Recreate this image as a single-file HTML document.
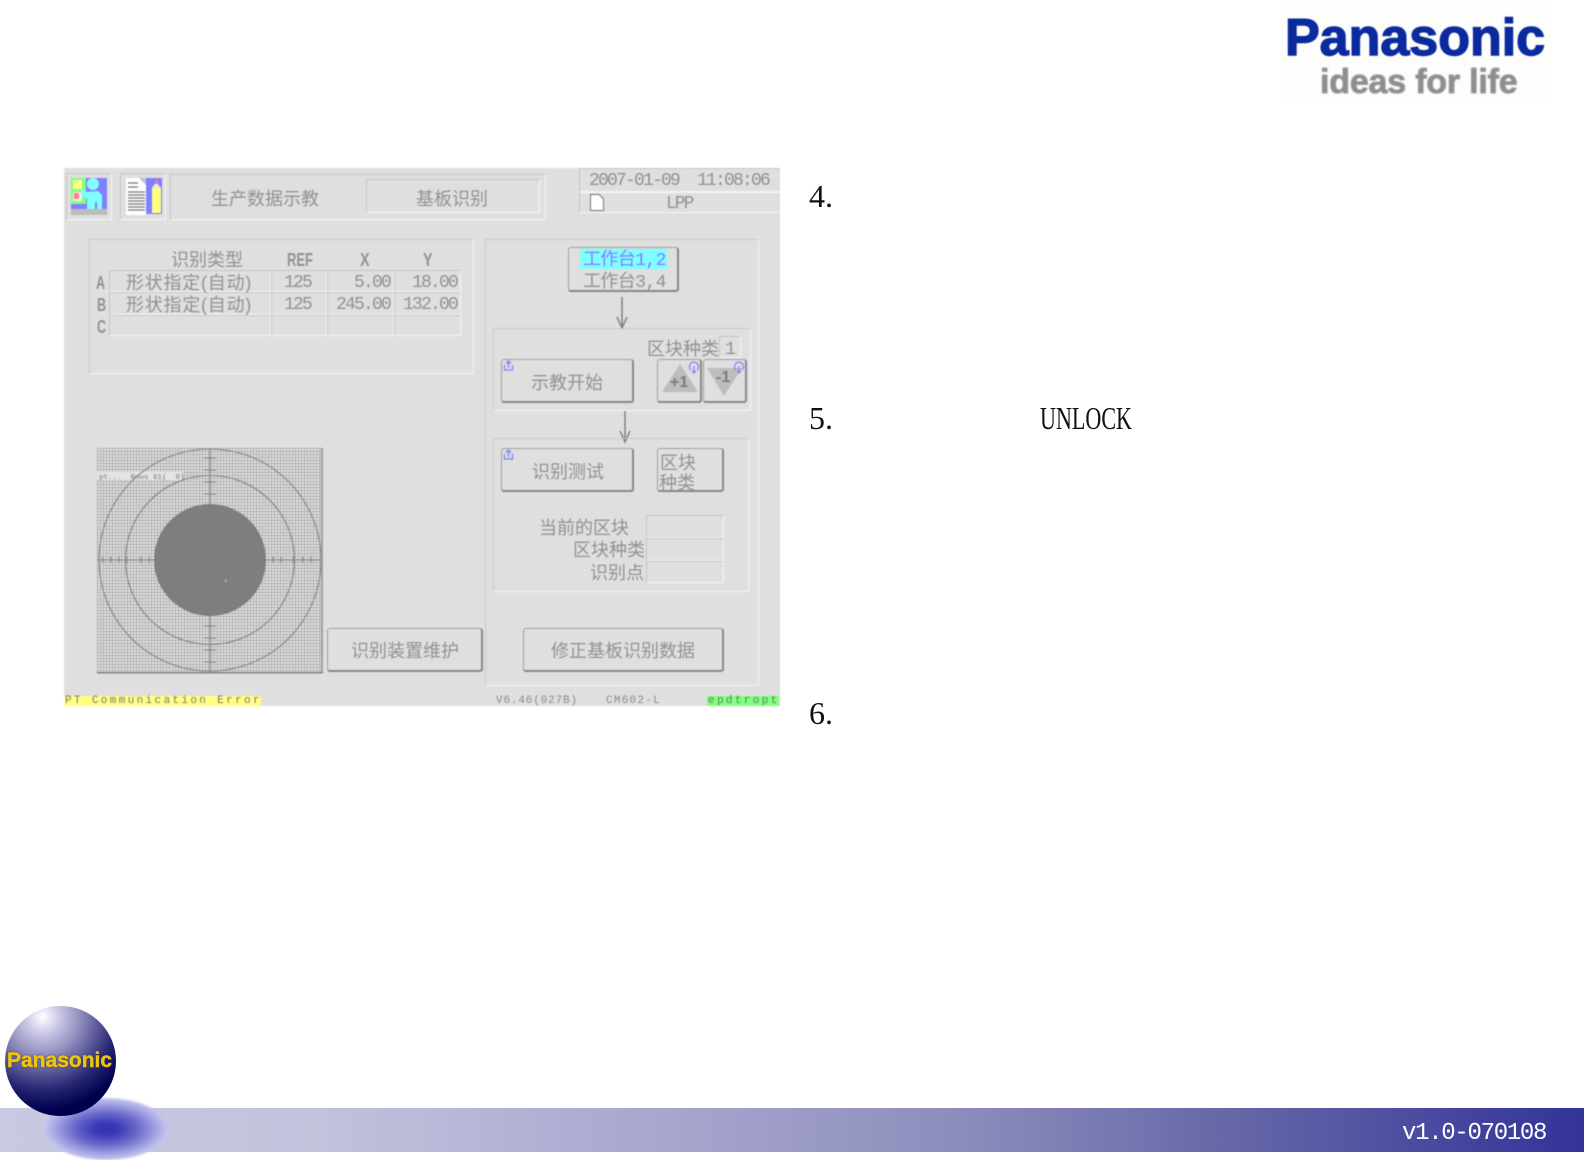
<!DOCTYPE html>
<html lang="zh">
<head>
<meta charset="utf-8">
<title>Panasonic</title>
<style>
html,body{margin:0;padding:0;background:#fff;}
body{position:relative;width:1585px;height:1160px;overflow:hidden;font-family:"Liberation Sans","Noto Sans CJK SC",sans-serif;}
.a{position:absolute;box-sizing:border-box;}
.t{position:absolute;white-space:nowrap;line-height:1;color:#929292;font-size:18px;font-family:"Liberation Sans","WenQuanYi Zen Hei","Noto Sans CJK SC",sans-serif;}
.m{font-family:"Liberation Mono","WenQuanYi Zen Hei",monospace;}
.g{position:absolute;box-sizing:border-box;border:1.5px solid;border-color:#c6c6c6 #f6f6f6 #f6f6f6 #c6c6c6;}
.p{position:absolute;box-sizing:border-box;border:1.5px solid;border-color:#c8c8c8 #f6f6f6 #f6f6f6 #c8c8c8;}
.b{position:absolute;box-sizing:border-box;border:1.5px solid #a0a0a0;border-bottom:2px solid #888;border-right:2px solid #888;border-radius:3px;background:#dfdfdf;}
.c{position:absolute;box-sizing:border-box;border:1.5px solid;border-color:#c4c4c4 #f6f6f6 #f6f6f6 #c4c4c4;}
.big{position:absolute;color:#111;font-family:"Liberation Serif","Noto Serif CJK SC",serif;font-size:32px;line-height:1;white-space:nowrap;}
#screen{position:absolute;left:64px;top:168px;width:716px;height:538px;background:#dfdfdf;}
#wrap{position:absolute;left:0;top:0;width:1585px;height:1160px;filter:blur(.4px);}
</style>
</head>
<body>

<div class="a" style="left:1284px;top:8px;width:264px;height:92px;background:#fdfdfb;filter:blur(3px)"></div>
<div class="t" style="left:1285px;top:12px;font-size:52px;font-weight:bold;color:#0a2a9e;-webkit-text-stroke:1.400px #0a2a9e;font-family:'Liberation Sans',sans-serif;filter:blur(.6px)">Panasonic</div>
<div class="t" style="left:1320px;top:65px;font-size:34px;font-weight:bold;color:#8e8e8e;-webkit-text-stroke:.8px #8e8e8e;letter-spacing:-.2px;font-family:'Liberation Sans',sans-serif;filter:blur(.9px)">ideas for life</div>

<div id="wrap">
<div id="screen"></div>

<!-- top icons -->
<div class="g" style="left:66px;top:173px;width:46px;height:47px"></div>
<div class="g" style="left:120px;top:173px;width:46px;height:47px"></div>
<svg class="a" style="left:66px;top:173px" width="100" height="47" viewBox="0 0 100 47">
  <rect x="5" y="5" width="36" height="31" fill="#8080ff"/>
  <rect x="5" y="36" width="36" height="6" fill="#bcbcbc"/>
  <rect x="5" y="5" width="15" height="26" fill="#80ff80"/>
  <rect x="7" y="7" width="9" height="9" fill="#ffff80"/>
  <rect x="7" y="19" width="9" height="9" fill="#f0f0f0"/>
  <rect x="8" y="20" width="5" height="6" fill="#ff8080"/>
  <circle cx="27" cy="11" r="6" fill="#80ffff"/>
  <path d="M16 15 L22 21 L20 19 L32 18 L36 22 L36 36 L31 36 L31 29 L29 29 L29 36 L21 36 L21 26 L14 19 Z" fill="#80ffff"/>
  <rect x="60" y="5" width="36" height="36" fill="#8080ff"/>
  <rect x="60" y="5" width="20" height="37" fill="#fff"/>
  <path d="M73 5 L80 5 L80 12 Z" fill="#c0c0e0"/>
  <path d="M62 10h10M62 14h10M62 19h17M62 22h17M62 25h17M62 28h17M62 31h17M62 34h17M62 37h17" stroke="#777" stroke-width="1.200"/>
  <rect x="86" y="15" width="9" height="25" fill="#ffff80"/>
  <path d="M86 15 L90 9 L95 15 Z" fill="#e8e8e8"/>
  <rect x="89" y="7" width="3" height="4" fill="#f08080"/>
</svg>

<!-- title -->
<div class="g" style="left:170px;top:174px;width:376px;height:46px"></div>
<div class="g" style="left:366px;top:179px;width:174px;height:34px"></div>
<div class="t" style="left:211px;top:190px">生产数据示教</div>
<div class="t" style="left:416px;top:190px">基板识别</div>

<!-- date -->
<div class="g" style="left:579px;top:168px;width:201px;height:45px;border-right:0"></div>
<div class="a" style="left:580px;top:191px;width:200px;height:1.500px;background:#f4f4f4"></div>
<div class="t m" style="left:589px;top:172px;font-size:18px;letter-spacing:-1.800px;">2007-01-09&nbsp;&nbsp;11:08:06</div>
<div class="t m" style="left:666px;top:195px;font-size:18px;letter-spacing:-2px">LPP</div>
<svg class="a" style="left:589px;top:193px" width="16" height="19" viewBox="0 0 16 19"><path d="M1.500 1.500H10L14.500 6V17.500H1.500Z" fill="#fff" stroke="#777" stroke-width="1"/></svg>

<!-- table panel -->
<div class="p" style="left:89px;top:239px;width:385px;height:135px"></div>
<div class="t" style="left:171px;top:251px">识别类型</div>
<div class="t" style="left:287px;top:251px;font-weight:bold;transform:scaleX(.72);transform-origin:0 0">REF</div>
<div class="t" style="left:360px;top:251px;font-weight:bold;transform:scaleX(.8);transform-origin:0 0">X</div>
<div class="t" style="left:423px;top:251px;font-weight:bold;transform:scaleX(.8);transform-origin:0 0">Y</div>
<div class="t" style="left:96px;top:274px;font-weight:bold;transform:scaleX(.7);transform-origin:0 0">A</div>
<div class="t" style="left:97px;top:296px;font-weight:bold;transform:scaleX(.7);transform-origin:0 0">B</div>
<div class="t" style="left:97px;top:318px;font-weight:bold;transform:scaleX(.7);transform-origin:0 0">C</div>

<div class="c" style="left:109px;top:270px;width:162px;height:22px"></div>
<div class="c" style="left:271px;top:270px;width:56px;height:22px"></div>
<div class="c" style="left:327px;top:270px;width:67px;height:22px"></div>
<div class="c" style="left:394px;top:270px;width:67px;height:22px"></div>
<div class="c" style="left:109px;top:292px;width:162px;height:23px"></div>
<div class="c" style="left:271px;top:292px;width:56px;height:23px"></div>
<div class="c" style="left:327px;top:292px;width:67px;height:23px"></div>
<div class="c" style="left:394px;top:292px;width:67px;height:23px"></div>
<div class="c" style="left:109px;top:315px;width:162px;height:21px"></div>
<div class="c" style="left:271px;top:315px;width:56px;height:21px"></div>
<div class="c" style="left:327px;top:315px;width:67px;height:21px"></div>
<div class="c" style="left:394px;top:315px;width:67px;height:21px"></div>

<div class="t" style="left:126px;top:274px;letter-spacing:.75px">形状指定(自动)</div>
<div class="t" style="left:126px;top:296px;letter-spacing:.75px">形状指定(自动)</div>
<div class="t m" style="left:284px;top:274px;letter-spacing:-1.800px">125</div>
<div class="t m" style="left:354px;top:274px;letter-spacing:-1.800px">5.00</div>
<div class="t m" style="left:412px;top:274px;letter-spacing:-1.800px">18.00</div>
<div class="t m" style="left:284px;top:296px;letter-spacing:-1.800px">125</div>
<div class="t m" style="left:336px;top:296px;letter-spacing:-1.800px">245.00</div>
<div class="t m" style="left:403px;top:296px;letter-spacing:-1.800px">132.00</div>

<!-- right panel -->
<div class="p" style="left:485px;top:239px;width:274px;height:447px"></div>
<div class="b" style="left:568px;top:247px;width:111px;height:45px"></div>
<div class="a" style="left:580px;top:249px;width:87px;height:20px;background:#80ffff"></div>
<div class="t m" style="left:583px;top:252px;color:#8080ff;letter-spacing:-.6px">工作台1,2</div>
<div class="t m" style="left:583px;top:274px;letter-spacing:-.6px">工作台3,4</div>
<svg class="a" style="left:612px;top:295px" width="24" height="150" viewBox="0 0 24 150">
  <path d="M10 2V33M5 22L10 33L15 22" fill="none" stroke="#808080" stroke-width="1.500"/>
  <path d="M13 116V147M8 136L13 147L18 136" fill="none" stroke="#808080" stroke-width="1.500"/>
</svg>

<div class="p" style="left:493px;top:328px;width:258px;height:83px"></div>
<div class="t" style="left:647px;top:340px">区块种类</div>
<div class="c" style="left:719px;top:336px;width:22px;height:22px"></div>
<div class="t m" style="left:725px;top:341px">1</div>
<div class="b" style="left:501px;top:359px;width:133px;height:44px"></div>
<div class="t" style="left:531px;top:374px">示教开始</div>
<div class="b" style="left:657px;top:359px;width:45px;height:44px"></div>
<div class="b" style="left:703px;top:359px;width:44px;height:44px"></div>
<svg class="a" style="left:650px;top:355px" width="100" height="52" viewBox="0 0 100 52">
  <path d="M30 9L48 37H12Z" fill="#bdbdbd"/>
  <path d="M57 13H92L74 41Z" fill="#bdbdbd"/>
  <path d="M41 15a4.500 4.500 0 1 1 6 0M44 11v7M42 16l2 2l2-2" fill="none" stroke="#8080ff" stroke-width="1.200"/>
  <path d="M86 15a4.500 4.500 0 1 1 6 0M89 11v7M87 16l2 2l2-2" fill="none" stroke="#8080ff" stroke-width="1.200"/>
</svg>
<div class="t" style="left:670px;top:375px;font-size:16px;font-weight:bold;color:#7c7c7c">+1</div>
<div class="t" style="left:716px;top:370px;font-size:16px;font-weight:bold;color:#7c7c7c">-1</div>
<svg class="a" style="left:503px;top:360px" width="12" height="12" viewBox="0 0 12 12"><path d="M1.500 5V10H9.500V5M5.500 8V1.500M3 3.500L5.500 1L8 3.500" fill="none" stroke="#8080ff" stroke-width="1.300"/></svg>

<div class="p" style="left:493px;top:438px;width:256px;height:154px"></div>
<div class="b" style="left:501px;top:448px;width:133px;height:44px"></div>
<div class="t" style="left:532px;top:463px">识别测试</div>
<svg class="a" style="left:503px;top:449px" width="12" height="12" viewBox="0 0 12 12"><path d="M1.500 5V10H9.500V5M5.500 8V1.500M3 3.500L5.500 1L8 3.500" fill="none" stroke="#8080ff" stroke-width="1.300"/></svg>
<div class="b" style="left:657px;top:448px;width:67px;height:44px"></div>
<div class="t" style="left:660px;top:454px">区块</div>
<div class="t" style="left:659px;top:474px">种类</div>

<div class="t" style="left:539px;top:519px">当前的区块</div>
<div class="t" style="left:573px;top:541px">区块种类</div>
<div class="t" style="left:590px;top:564px">识别点</div>
<div class="c" style="left:646px;top:515px;width:78px;height:23px"></div>
<div class="c" style="left:646px;top:538px;width:78px;height:23px"></div>
<div class="c" style="left:646px;top:561px;width:78px;height:22px"></div>

<div class="b" style="left:523px;top:628px;width:201px;height:44px"></div>
<div class="t" style="left:551px;top:642px">修正基板识别数据</div>
<div class="b" style="left:327px;top:628px;width:156px;height:44px"></div>
<div class="t" style="left:351px;top:642px">识别装置维护</div>

<!-- camera -->
<svg class="a" style="left:97px;top:448px" width="227" height="226" viewBox="0 0 227 226">
  <defs>
    <pattern id="gd" width="3" height="3" patternUnits="userSpaceOnUse">
      <rect width="3" height="3" fill="#e8e8e8"/>
      <path d="M0 .5H3M.5 0V3" stroke="#b0b0b0" stroke-width="1"/>
    </pattern>
    <clipPath id="cl"><rect width="226" height="225"/></clipPath>
  </defs>
  <rect width="225" height="225" fill="url(#gd)"/>
  <rect x="224" y="0" width="2" height="225" fill="#a0a0a0"/>
  <rect x="0" y="224" width="226" height="1.500" fill="#808080"/>
  <rect x="0" y="24" width="86" height="8" fill="#e4e4e4"/>
  <text x="2" y="31" font-family="Liberation Mono,monospace" font-size="7.500" font-weight="bold" fill="#999">pt...&#160;&#160;Nows&#160;61(&#160;&#160;0)</text>
  <g clip-path="url(#cl)" fill="none" stroke="#858585" stroke-width="1.100">
    <circle cx="113" cy="112" r="111"/>
    <circle cx="113" cy="112" r="84.500"/>
    <path d="M113 0V225M0 112H226" stroke="#909090" stroke-width="1.200"/>
    <path d="M6 109v6M14 109v6M22 109v6M30 109v6M44 109v6M52 109v6M60 109v6M168 109v6M176 109v6M184 109v6M196 109v6M206 109v6M214 109v6"/>
    <path d="M107 10h12M107 22h12M107 34h12M107 46h12M107 178h12M107 190h12M107 202h12M107 214h12"/>
  </g>
  <circle cx="113" cy="112" r="56" fill="#7e7e7e"/>
  <rect x="128" y="132" width="1.500" height="1.500" fill="#ddd"/>
</svg>

<!-- status -->
<div class="a" style="left:64px;top:696px;width:197px;height:10px;background:#ffff80"></div>
<div class="t m" style="left:65px;top:696px;font-size:11px;letter-spacing:2.350px;color:#7a7a7a">PT Communication Error</div>
<div class="t m" style="left:496px;top:696px;font-size:11px;letter-spacing:.85px;color:#8a8a8a">V6.46(027B)</div>
<div class="t m" style="left:606px;top:696px;font-size:11px;letter-spacing:1.250px;color:#8a8a8a">CM602-L</div>
<div class="a" style="left:707px;top:696px;width:72px;height:10px;background:#80ff80"></div>
<div class="t m" style="left:708px;top:696px;font-size:11px;letter-spacing:2.350px;color:#5a8a5a">epdtropt</div>
</div>

<!-- right text -->
<div class="big" style="left:809px;top:180px">4.</div>
<div class="big" style="left:809px;top:402px">5.</div>
<div class="big" style="left:809px;top:697px">6.</div>
<div class="big" style="left:1040px;top:402px;transform:scaleX(.69);transform-origin:0 0">UNLOCK</div>

<!-- footer -->
<div class="a" style="left:0;top:1108px;width:1584px;height:44px;background:linear-gradient(90deg,#c9c9e2 0%,#c2c2dd 20%,#a9a9d0 40%,#8e8ebd 60%,#6666a8 78%,#333399 100%)"></div>
<div class="a" style="left:44px;top:1098px;width:124px;height:62px;border-radius:50%;background:radial-gradient(ellipse at center,#3030b4 0%,#3a3ab8 14%,#6868c8 36%,#b0b0e8 62%,#e8e8fa 84%,#fcfcff 100%);filter:blur(1px)"></div>
<div class="a" style="left:5px;top:1006px;width:111px;height:110px;border-radius:50%;background:radial-gradient(circle at 34% 10%,#ffffff 0%,#c9c6e6 14%,#9a97c4 28%,#5e5c9c 44%,#24246f 60%,#000050 76%,#000040 100%)"></div>
<div class="t" style="left:7px;top:1050px;font-size:21px;font-weight:bold;color:#eec40c;-webkit-text-stroke:.4px #eec40c;font-family:'Liberation Sans',sans-serif;text-shadow:0 0 2px #302a30">Panasonic</div>
<div class="t" style="left:1402px;top:1122px;font-size:24px;color:#fff;font-family:'Liberation Mono',monospace;letter-spacing:-1.300px">v1.0-070108</div>
</body>
</html>
